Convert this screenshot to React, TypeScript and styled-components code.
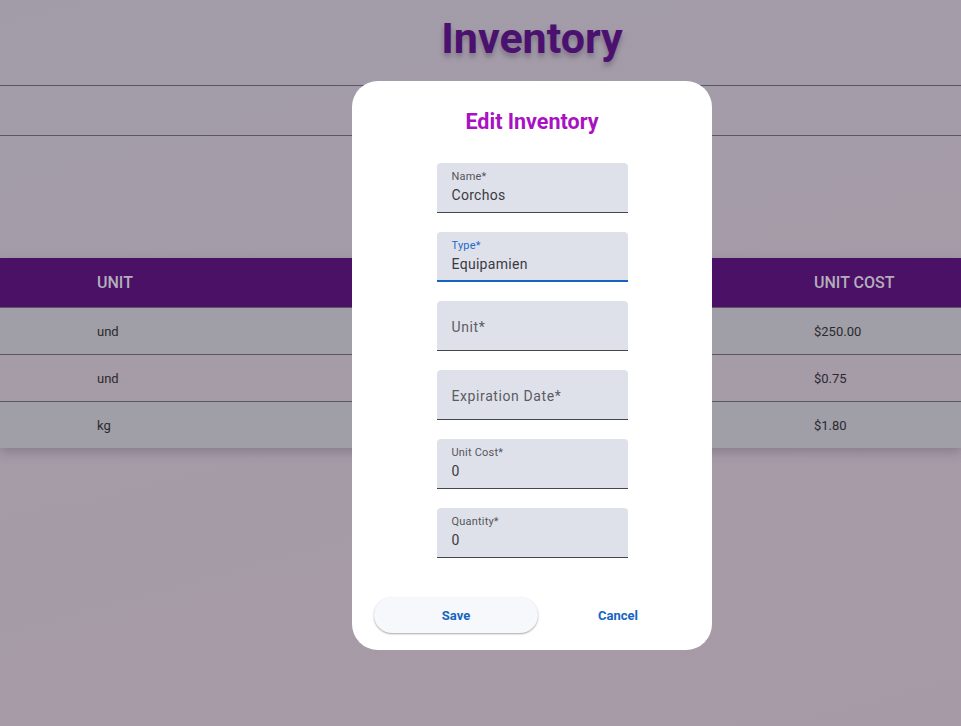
import styled, { createGlobalStyle } from "styled-components";

const GlobalStyle = createGlobalStyle`
    * { box-sizing: border-box; }
    body {
        margin: 0;
        font-family: Roboto, "Liberation Sans", Arial, sans-serif;
    }
`

const Page = styled.div`
    min-height: 100vh;
    background: linear-gradient(165deg, #a29ca9 0%, #a59ba7 60%, #a69aa6 100%);
    padding-top: 12px;
    overflow: hidden;
`

const Title = styled.h1`
    margin: 0;
    padding-left: 103px;
    text-align: center;
    font-size: 43px;
    font-weight: 700;
    line-height: 52px;
    color: #4b116f;
    text-shadow: 0 4px 5px rgba(60, 40, 70, 0.35);
`

const FilterBar = styled.div`
    margin-top: 21px;
    height: 51px;
    border-top: 1px solid #5b5760;
    border-bottom: 1px solid #5b5760;
`

const Table = styled.div`
    margin-top: 122px;
    box-shadow: 0 4px 10px rgba(80, 70, 85, 0.35);
`

const Row = styled.div<{ $head?: boolean; $tint?: boolean }>`
    display: grid;
    grid-template-columns: 270px 200px 247px 1fr;
    align-items: center;
    padding-left: 97px;
    height: ${p => (p.$head ? "49px" : "47px")};
    background: ${p => (p.$head ? "#4a1166" : p.$tint ? "#a69ca7" : "#a09ea6")};
    border-top: ${p => (p.$head ? "none" : "1px solid #5a575e")};
    color: ${p => (p.$head ? "#b3aebb" : "#2b2a2e")};
    font-size: ${p => (p.$head ? "16px" : "13px")};
    font-weight: ${p => (p.$head ? 500 : 400)};
    text-transform: ${p => (p.$head ? "uppercase" : "none")};
`

const Cell = styled.span``

const Overlay = styled.div`
    position: fixed;
    inset: 0;
    padding: 81px 0 0 352px;
`

const Dialog = styled.div`
    width: 360px;
    height: 569px;
    background: #ffffff;
    border-radius: 26px;
    padding-top: 27px;
    display: flex;
    flex-direction: column;
    align-items: center;
`

const DialogTitle = styled.h2`
    margin: 0;
    font-size: 21.5px;
    font-weight: 700;
    line-height: 28px;
    color: #a812c2;
`

const Form = styled.div`
    margin-top: 27px;
    display: flex;
    flex-direction: column;
    gap: 19px;
`

const Field = styled.div<{ $focused?: boolean }>`
    width: 191px;
    height: 50px;
    background: #dfe1ea;
    border-radius: 4px 4px 0 0;
    border-bottom: ${p => (p.$focused ? "2px solid #1565c0" : "1px solid #45454d")};
    padding: 7px 15px 0;
    display: flex;
    flex-direction: column;
`

const SmallLabel = styled.span<{ $focused?: boolean }>`
    font-size: 11px;
    line-height: 13px;
    letter-spacing: 0.2px;
    color: ${p => (p.$focused ? "#1a6ccc" : "#55555c")};
`

const Value = styled.span`
    margin-top: 2px;
    font-size: 14px;
    line-height: 20px;
    letter-spacing: 0.3px;
    color: #3a3a42;
`

const EmptyLabel = styled.span`
    margin-top: 9px;
    font-size: 14px;
    line-height: 20px;
    letter-spacing: 0.6px;
    color: #5b5b63;
`

const Actions = styled.div`
    margin-top: 39px;
    align-self: stretch;
    display: grid;
    grid-template-columns: 164px 160px;
    padding-left: 22px;
    align-items: center;
`

const Button = styled.button<{ $raised?: boolean }>`
    height: 36px;
    border: none;
    border-radius: 18px;
    font-family: Roboto, "Liberation Sans", Arial, sans-serif;
    font-size: 13px;
    font-weight: 700;
    color: #1565c0;
    background: ${p => (p.$raised ? "#f7f8fc" : "transparent")};
    box-shadow: ${p => (p.$raised ? "0 1px 2px rgba(0,0,0,0.35)" : "none")};
`

interface FieldProps {
    label: string
    value?: string
    focused?: boolean
}

const InputField = ({ label, value, focused }: FieldProps) => (
    <Field $focused={focused}>
        {value !== undefined ? (
            <>
                <SmallLabel $focused={focused}>{label}</SmallLabel>
                <Value>{value}</Value>
            </>
        ) : (
            <EmptyLabel>{label}</EmptyLabel>
        )}
    </Field>
)

const rows = [
    { unit: "und", type: "Equipamiento", qty: "10", cost: "$250.00" },
    { unit: "und", type: "Insumo", qty: "200", cost: "$0.75" },
    { unit: "kg", type: "Insumo", qty: "35", cost: "$1.80" },
]

export default function App() {
    return (
        <>
            <GlobalStyle />
            <Page>
                <Title>Inventory</Title>
                <FilterBar />
                <Table>
                    <Row $head>
                        <Cell>Unit</Cell>
                        <Cell>Type</Cell>
                        <Cell>Quantity</Cell>
                        <Cell>Unit Cost</Cell>
                    </Row>
                    {rows.map((r, i) => (
                        <Row key={i} $tint={i === 1}>
                            <Cell>{r.unit}</Cell>
                            <Cell>{r.type}</Cell>
                            <Cell>{r.qty}</Cell>
                            <Cell>{r.cost}</Cell>
                        </Row>
                    ))}
                </Table>
            </Page>
            <Overlay>
                <Dialog>
                    <DialogTitle>Edit Inventory</DialogTitle>
                    <Form>
                        <InputField label="Name*" value="Corchos" />
                        <InputField label="Type*" value="Equipamien" focused />
                        <InputField label="Unit*" />
                        <InputField label="Expiration Date*" />
                        <InputField label="Unit Cost*" value="0" />
                        <InputField label="Quantity*" value="0" />
                    </Form>
                    <Actions>
                        <Button $raised>Save</Button>
                        <Button>Cancel</Button>
                    </Actions>
                </Dialog>
            </Overlay>
        </>
    )
}
